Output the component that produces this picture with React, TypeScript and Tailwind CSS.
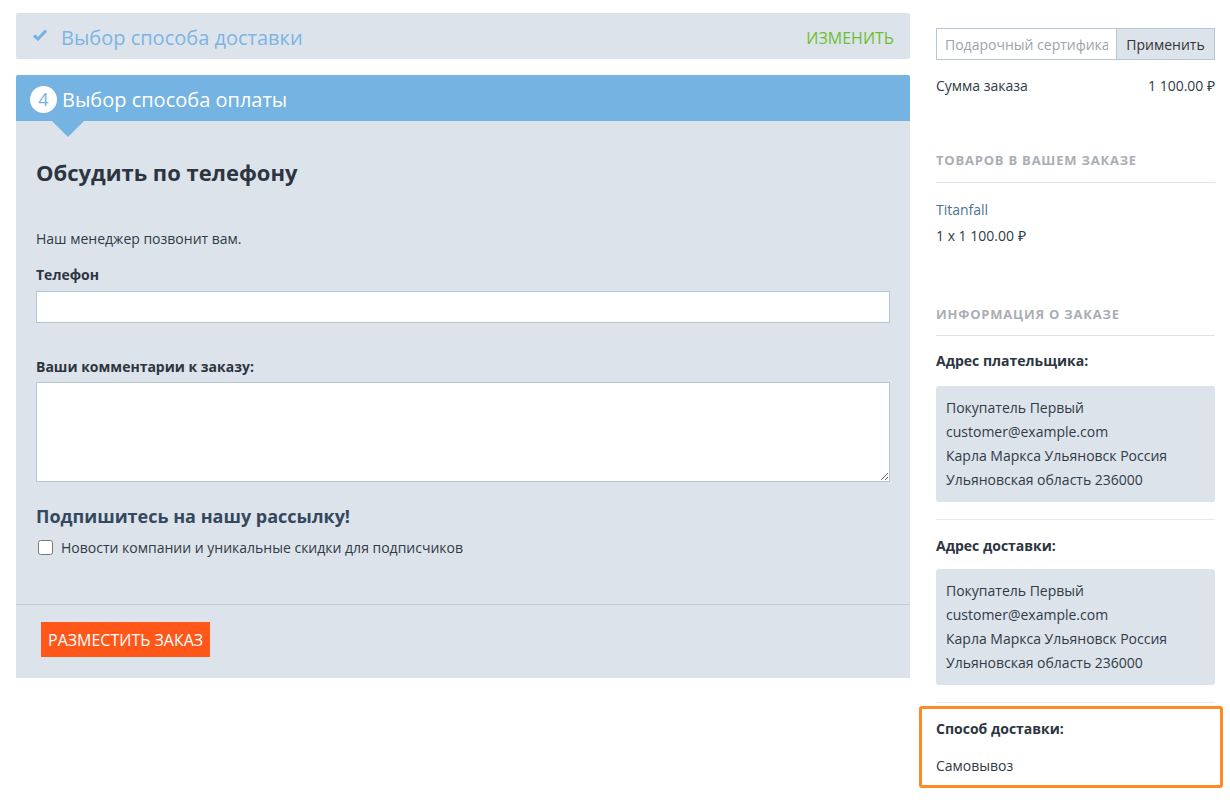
const payer = [
  "Покупатель Первый",
  "customer@example.com",
  "Карла Маркса Ульяновск Россия",
  "Ульяновская область 236000",
];

function AddressBox({ lines }: { lines: string[] }) {
  return (
    <div className="bg-[#dde3eb] rounded-[3px] px-[10px] py-[10px] text-[14px] leading-[24px] text-[#2f3b46]">
      {lines.map((l) => (
        <div key={l}>{l}</div>
      ))}
    </div>
  );
}

export default function App() {
  return (
    <div className="w-[1230px] h-[800px] bg-white font-['Open_Sans',sans-serif] text-[#333] flex gap-[26px] pl-[16px] pt-[13px] overflow-hidden">
      {/* left column */}
      <div className="w-[894px] flex flex-col">
        <div className="h-[46px] bg-[#dde3eb] rounded-[2px] flex items-center pl-[17px] pr-[16px] pt-[4px]">
          <svg width="14" height="12" viewBox="0 0 14 12" className="mr-[14px] mb-[6px]">
            <path d="M1 6.5 L5 10 L13 1.5" fill="none" stroke="#74b3e2" strokeWidth="3" />
          </svg>
          <span className="text-[20px] text-[#7cb5e4]">Выбор способа доставки</span>
          <span className="ml-auto text-[16px] text-[#6cc02f]">ИЗМЕНИТЬ</span>
        </div>

        <div className="mt-[16px] h-[46px] bg-[#74b3e2] rounded-t-[2px] flex items-center pl-[14px] pt-[3px] relative">
          <span className="w-[27px] h-[27px] rounded-full bg-white text-[#74b3e2] text-[18px] flex items-center justify-center mr-[5px]">
            4
          </span>
          <span className="text-[20px] text-white">Выбор способа оплаты</span>
          <span className="absolute left-[36px] top-[46px] w-0 h-0 border-l-[16px] border-r-[16px] border-t-[16px] border-l-transparent border-r-transparent border-t-[#74b3e2]" />
        </div>

        <div className="bg-[#dde3eb] flex flex-col">
          <div className="px-[20px] pt-[36px] pb-[46px]">
            <h2 className="text-[22px] font-bold text-[#2c3540] leading-[30px]">Обсудить по телефону</h2>
            <p className="mt-[41px] text-[14px] text-[#2f3b46]">Наш менеджер позвонит вам.</p>
            <div className="mt-[15px] text-[14px] font-bold text-[#2c3540]">Телефон</div>
            <input className="mt-[6px] block w-full h-[32px] bg-white border border-[#b7c6d5] outline-none" />
            <div className="mt-[33px] text-[14px] font-bold text-[#2c3540]">Ваши комментарии к заказу:</div>
            <textarea className="mt-[5px] block w-full h-[100px] bg-white border border-[#b7c6d5] outline-none resize-y" />
            <h3 className="mt-[21px] text-[18px] font-bold text-[#34495e] leading-[26px]">Подпишитесь на нашу рассылку!</h3>
            <label className="mt-[8px] flex items-center gap-[8px] text-[14px] text-[#2f3b46]">
              <input type="checkbox" className="w-[15px] h-[15px] ml-[2px]" />
              Новости компании и уникальные скидки для подписчиков
            </label>
          </div>
          <div className="border-t border-[#c3ccd8] pt-[17px] pb-[21px] pl-[25px]">
            <button className="h-[35px] px-[7px] bg-[#ff5719] text-white text-[16px]">РАЗМЕСТИТЬ ЗАКАЗ</button>
          </div>
        </div>
      </div>

      {/* right column */}
      <div className="w-[279px] flex flex-col pt-[15px] text-[14px] text-[#2f3b46]">
        <div className="flex h-[32px]">
          <input
            placeholder="Подарочный сертификат"
            className="w-[180px] h-full border border-[#b7c6d5] border-r-0 px-[8px] text-[14px] placeholder:text-[#9aa4ae] outline-none"
          />
          <button className="flex-1 h-full bg-[#dde3eb] border border-[#b7c6d5] text-[14px] text-[#333]">Применить</button>
        </div>
        <div className="mt-[15px] flex justify-between">
          <span>Сумма заказа</span>
          <span>1 100.00 ₽</span>
        </div>

        <div className="mt-[55px] pb-[11px] border-b border-[#dde3eb] text-[13px] font-bold tracking-[0.06em] text-[#a9aeb5]">
          ТОВАРОВ В ВАШЕМ ЗАКАЗЕ
        </div>
        <div className="mt-[16px] text-[#4d7392]">Titanfall</div>
        <div className="mt-[5px]">1 x 1 100.00 ₽</div>

        <div className="mt-[59px] pb-[11px] border-b border-[#dde3eb] text-[13px] font-bold tracking-[0.06em] text-[#a9aeb5]">
          ИНФОРМАЦИЯ О ЗАКАЗЕ
        </div>
        <div className="mt-[14px] font-bold text-[#2c3540]">Адрес плательщика:</div>
        <div className="mt-[15px]">
          <AddressBox lines={payer} />
        </div>
        <div className="mt-[17px] border-t border-[#e6eaef]" />
        <div className="mt-[15px] font-bold text-[#2c3540]">Адрес доставки:</div>
        <div className="mt-[13px]">
          <AddressBox lines={payer} />
        </div>
        <div className="mt-[17px] border-t border-[#e6eaef]" />
        <div className="mt-[3px] -ml-[17px] w-[304px] border-[3px] border-[#ff8a24] rounded-[3px] px-[14px] pt-[9px] pb-[9px]">
          <div className="font-bold text-[#2c3540]">Способ доставки:</div>
          <div className="mt-[16px]">Самовывоз</div>
        </div>
      </div>
    </div>
  );
}
